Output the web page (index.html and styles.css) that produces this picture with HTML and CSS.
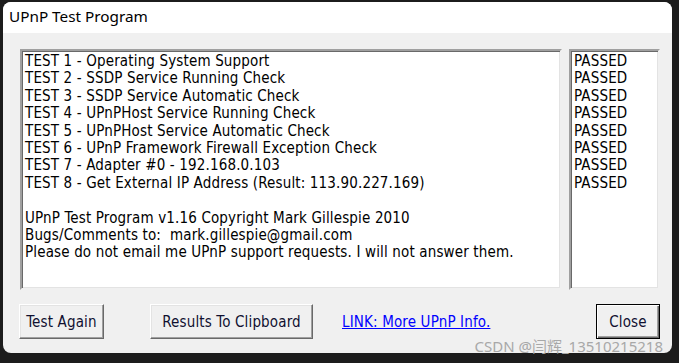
FILE: index.html
```html
<html lang="en">
<head>
  <meta charset="UTF-8">
  <title>UPnP Test Program</title>
  <link rel="stylesheet" href="styles.css">
</head>
<body>
  <div class="window">
    <div class="titlebar">UPnP Test Program</div>
    <div class="client">
      <div class="lists">
        <div class="listbox results">
          <div class="line">TEST 1 - Operating System Support</div>
          <div class="line">TEST 2 - SSDP Service Running Check</div>
          <div class="line">TEST 3 - SSDP Service Automatic Check</div>
          <div class="line">TEST 4 - UPnPHost Service Running Check</div>
          <div class="line">TEST 5 - UPnPHost Service Automatic Check</div>
          <div class="line">TEST 6 - UPnP Framework Firewall Exception Check</div>
          <div class="line">TEST 7 - Adapter #0 - 192.168.0.103</div>
          <div class="line">TEST 8 - Get External IP Address (Result: 113.90.227.169)</div>
          <div class="line">&nbsp;</div>
          <div class="line">UPnP Test Program v1.16 Copyright Mark Gillespie 2010</div>
          <div class="line">Bugs/Comments to:&nbsp; mark.gillespie@gmail.com</div>
          <div class="line">Please do not email me UPnP support requests. I will not answer them.</div>
        </div>
        <div class="listbox status">
          <div class="line">PASSED</div>
          <div class="line">PASSED</div>
          <div class="line">PASSED</div>
          <div class="line">PASSED</div>
          <div class="line">PASSED</div>
          <div class="line">PASSED</div>
          <div class="line">PASSED</div>
          <div class="line">PASSED</div>
        </div>
      </div>
      <div class="buttons">
        <button class="btn btn-test">Test Again</button>
        <button class="btn btn-clip">Results To Clipboard</button>
        <a class="link" href="#">LINK: More UPnP Info.</a>
        <button class="btn btn-close">Close</button>
      </div>
    </div>
  </div>
  <div class="watermark">CSDN @闫辉_13510215218</div>
</body>
</html>
```

FILE: styles.css
```css
* {
  margin: 0;
  padding: 0;
  box-sizing: border-box;
}
body {
  position: relative;
  background: #1c1c1c;
  width: 679px;
  height: 363px;
  overflow: hidden;
  padding: 2px 7px 10px 3px;
}
.window {
  width: 669px;
  height: 351px;
  background: #f0f0f0;
  border-radius: 8px;
  overflow: hidden;
  display: flex;
  flex-direction: column;
}
.titlebar {
  height: 31px;
  background: #fff;
  font-family: "Noto Sans", sans-serif;
  font-size: 15.3px;
  line-height: 29px;
  padding-left: 6px;
  color: #000;
}
.client {
  padding: 16px 12px 0 17px;
  font-family: "DejaVu Sans Condensed", "DejaVu Sans", sans-serif;
  font-size: 15px;
  letter-spacing: 0.15px;
  color: #000;
}
.lists {
  display: flex;
  gap: 7px;
  height: 241px;
}
.listbox {
  background: #fff;
  border: 2px solid;
  border-color: #a0a0a0 #f0f0f0 #f0f0f0 #a0a0a0;
  box-shadow: inset 1px 1px 0 #696969, inset -1px -1px 0 #e3e3e3;
  padding: 2px 3px;
}
.results {
  width: 542px;
}
.status {
  width: 91px;
}
.line {
  height: 17.4px;
  line-height: 17.4px;
  white-space: nowrap;
}
.buttons {
  display: flex;
  align-items: center;
  margin-top: 14px;
  height: 35px;
}
.btn {
  font-family: inherit;
  font-size: 15px;
  letter-spacing: 0.15px;
  color: #101030;
  background: #f0f0f0;
  height: 35px;
  border: 1px solid;
  border-color: #fff #696969 #696969 #fff;
  box-shadow: inset -1px -1px 0 #a0a0a0, inset 1px 1px 0 #e3e3e3;
}
.btn-test {
  width: 85px;
  margin-left: -1px;
}
.btn-clip {
  width: 163px;
  margin-left: 46px;
}
.link {
  color: #0000ff;
  margin-left: 29px;
  text-decoration: underline;
}
.btn-close {
  width: 64px;
  margin-left: auto;
  border: 1px solid #000;
  box-shadow: inset 1px 1px 0 #fff, inset -1px -1px 0 #696969, inset -2px -2px 0 #a0a0a0;
}
.watermark {
  position: absolute;
  right: 16px;
  bottom: 7px;
  font-family: "Noto Sans", "Noto Sans CJK SC", sans-serif;
  font-size: 15px;
  line-height: 20px;
  color: #a8a8a8;
}
```
